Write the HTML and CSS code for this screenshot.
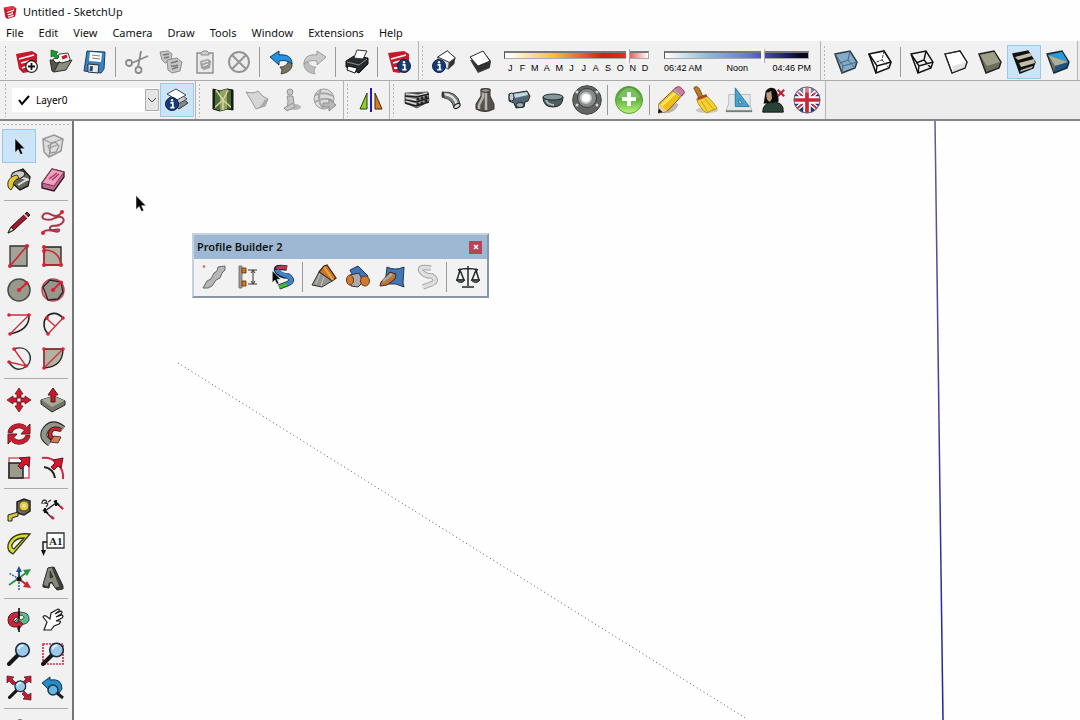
FILE: index.html
```html
<!DOCTYPE html>
<html lang="en">
<head>
<meta charset="utf-8">
<title>Untitled - SketchUp</title>
<link rel="stylesheet" href="styles.css">
</head>
<body>
<svg class="defs" aria-hidden="true">
  <symbol id="logo" viewBox="0 0 24 24"><path d="M1 4 17 1l6 4-2 14-13 4-4-3z" fill="#c8182c"/><path d="M1 4 17 1l6 4-14 3z" fill="#e03a48"/><path d="M7 12l12-4M8 16l8-2v-3M9 20l9-3" stroke="#fff" stroke-width="2" fill="none"/></symbol>
  <symbol id="info" viewBox="0 0 14 14"><circle cx="7" cy="7" r="6.600" fill="#173a78" stroke="#081a3c" stroke-width=".8"/><path d="M5.500 5.800h2.300v4.700M5.300 10.600h4.200" stroke="#fff" stroke-width="1.700" fill="none"/><circle cx="7" cy="3.300" r="1.200" fill="#fff"/></symbol>
  <symbol id="box" viewBox="0 0 24 24"><path d="M2 8 13 1l9 8-7 12-9-4z" fill="#fff" stroke="#222"/><path d="M15 14l7-5-1 7-7 6z" fill="#333"/><path d="M2 8l13 6-1 8-10-6z" fill="#ddd" stroke="#444"/><path d="M2 8 13 1l9 8-7 5z" fill="#fff" stroke="#333"/></symbol>
  <symbol id="lens" viewBox="0 0 24 24"><path d="M2 22l9-9" stroke="#161616" stroke-width="4" stroke-linecap="round"/><circle cx="15.500" cy="8" r="6.800" fill="#9cc8ea" stroke="#1c2b3a" stroke-width="1.600"/><path d="M11.500 7q1-3.500 5-3.500" stroke="#e2f2ff" stroke-width="2" fill="none"/></symbol>
  <symbol id="cursor" viewBox="0 0 12 18"><path d="M1 1v14l3.200-3L6.500 17l2.300-1-2.200-4.800H11z" fill="#050505" stroke="#fff" stroke-width=".5"/></symbol>
</svg>

<header class="titlebar"><svg class="app-icon"><use href="#logo"/></svg><span>Untitled - SketchUp</span></header>
<nav class="menu" aria-label="Main menu">
  <button>File</button><button>Edit</button><button>View</button><button>Camera</button><button>Draw</button><button>Tools</button><button>Window</button><button>Extensions</button><button>Help</button>
</nav>

<div class="toolrow">
  <div class="toolbar first">
    <i class="grip"></i>
    <button class="tool" aria-label="New"><svg viewBox="0 0 24 24"><path d="M1 4 17 1l5 3v8l-8 10-6 1-4-4z" fill="#c8182c"/><path d="M4 9l15-4M6 13l8-2M7 18l6-2" stroke="#fff" stroke-width="1.600"/><circle cx="16.500" cy="16.500" r="5.800" fill="#fff" stroke="#222" stroke-width="1.300"/><path d="M13 16.500h7M16.500 13v7" stroke="#111" stroke-width="1.800"/></svg></button>
    <button class="tool" aria-label="Open"><svg viewBox="0 0 24 24"><path d="M4 9l5-1 1-4 9-1 2 6-1 3-14 9z" fill="#f4f4f4" stroke="#444"/><path d="M13 8l5-2" stroke="#c8182c" stroke-width="3"/><path d="M1 10h3l3 3 4-1-6 10L3 21z" fill="#55564a" stroke="#2c2d24"/><path d="M5 22l5-10 3 1 10-3-6 10z" fill="#8c8d7c" stroke="#2c2d24"/><path d="M2 7V0l7 2-2 2 3 3-2 2-4-3z" fill="#189b32" stroke="#0c5419" stroke-width=".7"/></svg></button>
    <button class="tool" aria-label="Save"><svg viewBox="0 0 24 24"><path d="M4 1l18 1-1 17-3 4L1 21z" fill="#3a82c4" stroke="#173f66"/><path d="M7 2l12 1-1 9-12-1z" fill="#fff"/><path d="M9 5l8 1M9 8l8 1" stroke="#778" /><path d="M5 14l11 1-1 8-10-1z" fill="#e4e9ec" stroke="#234"/><path d="M7 16l3 .3-.5 5-3-.3z" fill="#264a6e"/></svg></button>
    <i class="sep"></i>
    <button class="tool" aria-label="Cut"><svg viewBox="0 0 24 24"><g fill="none" stroke="#8b8b8b" stroke-width="1.800"><circle cx="4" cy="13" r="3"/><circle cx="13.500" cy="20" r="3"/><path d="M7 13l16-7M13 17l3-16"/></g></svg></button>
    <button class="tool" aria-label="Copy"><svg viewBox="0 0 24 24"><g fill="#c5c5c5" stroke="#8e8e8e"><path d="M1 2l8-1 4 3-1 7-6 2-3-3z"/><path d="M8 10l10-2 5 4-2 9-8 2-4-3z"/></g><path d="M4 5l6-1M5 8l5-1M12 13l7-2M12 16h4l3-1M13 19l6-2" stroke="#777" stroke-width="1.500" fill="none"/></svg></button>
    <button class="tool" aria-label="Paste"><svg viewBox="0 0 24 24"><path d="M4 3h16v20H4z" fill="#e8e8e8" stroke="#8e8e8e" stroke-width="1.400"/><path d="M8 5V3l2-2h4l2 2v2z" fill="#ccc" stroke="#8e8e8e"/><path d="M7 11l8-2 3 2-1 7-6 2-3-2z" fill="#a0a0a0"/><path d="M9 13l6-2M10 16l5-2" stroke="#eee" stroke-width="1.300"/></svg></button>
    <button class="tool" aria-label="Delete"><svg viewBox="0 0 24 24"><circle cx="12" cy="12" r="10" fill="#ececec" stroke="#949494" stroke-width="1.900"/><path d="M5 5l14 14M19 5 5 19" stroke="#949494" stroke-width="1.900"/></svg></button>
    <i class="sep"></i>
    <button class="tool" aria-label="Undo"><svg viewBox="0 0 24 24"><path d="M12 24l1-4-2-3c4 0 7-2 8-5l4 1c1 6-4 10-11 11z" fill="#77745f" stroke="#36342a" stroke-width=".8"/><path d="M1 7l9-6v4c8-1 13 2 13 9-3-3-7-4-13-3v4z" fill="#2492df" stroke="#123e66"/></svg></button>
    <button class="tool" aria-label="Redo"><svg viewBox="0 0 24 24"><path d="M12 24l-1-4 2-3c-4 0-7-2-8-5l-4 1c-1 6 4 10 11 11z" fill="#bdbdbd" stroke="#999" stroke-width=".8"/><path d="M23 7l-9-6v4C6 4 1 7 1 14c3-3 7-4 13-3v4z" fill="#ccc" stroke="#999"/></svg></button>
    <i class="sep"></i>
    <button class="tool" aria-label="Print"><svg viewBox="0 0 24 24"><path d="M1 11 9 6l14 2v6l-9 9-13-6z" fill="#272b2d" stroke="#111"/><path d="M9 8l3-8 10 1-4 8z" fill="#fff" stroke="#333"/><path d="M3 16l9 2-2 5-8-3z" fill="#fff" stroke="#111"/><path d="M2 12l12 3 8-6" stroke="#8c9192" fill="none"/></svg></button>
    <i class="sep"></i>
    <button class="tool" aria-label="Model Info"><svg viewBox="0 0 24 24"><path d="M1 3 17 1l5 3v12l-9 7-7-1z" fill="#c8182c"/><path d="M4 9l15-4M6 13l7-2M7 18h5" stroke="#fff" stroke-width="1.800"/><use href="#info" x="10" y="9" width="14" height="14"/></svg></button>
  </div>
  <div class="toolbar">
    <i class="grip"></i>
    <button class="tool" aria-label="Shadow Settings"><svg viewBox="0 0 24 24"><use href="#box" x="4" y="0" width="21" height="21"/><use href="#info" x="0" y="9" width="14" height="14"/></svg></button>
    <button class="tool shadow" aria-label="Shadows"><svg viewBox="0 0 24 24"><path d="M1 10l8 13 12-5-4-7z" fill="#3d3d3d"/><path d="M1 7 14 1l8 10-1 6-12 4z" fill="#303030"/><path d="M1 7 14 1l7 10-12 5z" fill="#fff" stroke="#333"/></svg></button>
    <div class="slider">
      <input class="range month" type="range" min="0" max="100" value="87" aria-label="Month">
      <div class="marks months"><span>J</span><span>F</span><span>M</span><span>A</span><span>M</span><span>J</span><span>J</span><span>A</span><span>S</span><span>O</span><span>N</span><span>D</span></div>
    </div>
    <div class="slider">
      <input class="range day" type="range" min="0" max="100" value="69" aria-label="Time of day">
      <div class="marks"><span>06:42 AM</span><span>Noon</span><span>04:46 PM</span></div>
    </div>
  </div>
  <div class="toolbar">
    <i class="grip"></i>
    <button class="tool" aria-label="X-ray"><svg viewBox="0 0 24 24"><path d="M1 4l15-3 7 11-2 6-13 5z" fill="#86abc8" stroke="#273947" stroke-width="1.500"/><path d="M1 4l8 12 14-4M9 16l-1 7M16 1l-2 9-8 3M14 10l7 8" stroke="#46687f" fill="none"/></svg></button>
    <button class="tool" aria-label="Back Edges"><svg viewBox="0 0 24 24"><path d="M1 4l15-3 7 11-2 6-13 5z" fill="#fff" stroke="#111" stroke-width="1.600"/><path d="M1 4l8 12 14-4M9 16l-1 7" stroke="#111" stroke-width="1.400" fill="none"/><path d="M16 1l-2 9-8 3M14 10l7 8" stroke="#444" stroke-dasharray="3 1" fill="none"/></svg></button>
    <i class="sep"></i>
    <button class="tool" aria-label="Wireframe"><svg viewBox="0 0 24 24"><path d="M1 4l15-3 7 11-2 6-13 5zM1 4l8 12 14-4M9 16l-1 7M16 1l-2 9-8 3M14 10l7 8" fill="none" stroke="#111" stroke-width="1.400"/></svg></button>
    <button class="tool" aria-label="Hidden Line"><svg viewBox="0 0 24 24"><path d="M1 4l15-3 7 11-2 6-13 5z" fill="#fff" stroke="#222" stroke-width="1.200"/><path d="M9 16l14-4-2 6-13 5z" fill="#e2e2e2"/><path d="M1 4l15-3 7 11-2 6-13 5z" fill="none" stroke="#222" stroke-width="1.200"/></svg></button>
    <button class="tool" aria-label="Shaded"><svg viewBox="0 0 24 24"><path d="M1 4l15-3 7 11-2 6-13 5z" fill="#6c6d5e" stroke="#222" stroke-width="1.500"/><path d="M2 5l14-3 6 10-13 4z" fill="#9d9f88"/></svg></button>
    <button class="tool active" aria-label="Shaded With Textures"><svg viewBox="0 0 24 24"><path d="M1 4l15-3 7 11-2 6-13 5z" fill="#111" stroke="#111" stroke-width="1.400"/><path d="M3 7l15-4 2 3-14 4zM7 13l15-4 1 4-14 4zM9 20l12-4-1 2-12 4z" fill="#c5bda8"/></svg></button>
    <button class="tool" aria-label="Monochrome"><svg viewBox="0 0 24 24"><path d="M1 4l15-3 7 11-2 6-13 5z" fill="#1e5380" stroke="#182934" stroke-width="1.400"/><path d="M2 5l14-3 6 10z" fill="#259cdb"/><path d="M2 5l20 7-13 4z" fill="#b1ad94"/><path d="M3 7l6 9-1 6z" fill="#77725e"/></svg></button>
  </div>
</div>

<div class="toolrow second">
  <div class="toolbar first">
    <i class="grip"></i>
    <label class="layer"><svg class="check" viewBox="0 0 12 12"><path d="M1 6l3 4 7-8" fill="none" stroke="#000" stroke-width="2"/></svg><select aria-label="Layer"><option>Layer0</option></select><span class="arrow"><svg viewBox="0 0 10 10"><path d="M1 3l4 4 4-4" fill="none" stroke="#444"/></svg></span></label>
    <button class="tool active" aria-label="Layers"><svg viewBox="0 0 24 24"><path d="M5 14l9-6 9 7-9 6z" fill="#888" stroke="#333"/><path d="M4 10l9-6 9 7-9 5z" fill="#ccc" stroke="#444"/><path d="M2 6l9-5 10 6-9 5z" fill="#fff" stroke="#444"/><use href="#info" x="0" y="9" width="14" height="14"/></svg></button>
  </div>
  <div class="toolbar">
    <i class="grip"></i>
    <button class="tool" aria-label="Add Location"><svg viewBox="0 0 24 24"><path d="M2 1l7 2 7-2 6 1v20l-6-1-7 2-7-2z" fill="#496c35" stroke="#111"/><path d="M9 3l7-2v20l-7 2z" fill="#8da464"/><path d="M3 20 12 12l5-10M5 2l7 10 9 8M12 12v10" stroke="#ddd29c" stroke-width="1.500" fill="none"/><path d="M2 2h2v18H2zM20 2h2v20h-2z" fill="#161d13"/></svg></button>
    <button class="tool" aria-label="Toggle Terrain"><svg viewBox="0 0 24 24"><path d="M1 4q8 2 12-1 4 6 10 8l-3 7-9 3Q6 12 1 4z" fill="#d6d6d6" stroke="#999"/><path d="M11 21q6-3 9-10l3 1-3 6z" fill="#aaa"/></svg></button>
    <button class="tool" aria-label="Photo Textures"><svg viewBox="0 0 24 24"><ellipse cx="16" cy="19" rx="6" ry="3" fill="#b9b9b9"/><g fill="#c6c6c6" stroke="#969696"><circle cx="11" cy="4" r="3"/><path d="M8 8h6l1 7-2 6H8l1-8z"/><path d="M5 20l9-5 2 4-8 4z"/></g></svg></button>
    <button class="tool" aria-label="Preview in Google Earth"><svg viewBox="0 0 24 24"><circle cx="11" cy="11" r="10" fill="#ddd" stroke="#999"/><path d="M2 7q10-4 18 1M2 14q10-6 18-1M8 1q-5 10 2 20" stroke="#a8a8a8" stroke-width="2" fill="none"/><path d="M10 15h6v-4l7 6-7 6v-4h-6z" fill="#b8b8b8" stroke="#8d8d8d"/></svg></button>
  </div>
  <div class="toolbar mirror">
    <i class="grip"></i>
    <button class="tool" aria-label="Mirror"><svg viewBox="0 0 24 24"><path d="M8 5v16H1z" fill="#8bd02b" stroke="#294016"/><path d="M16 5v16h7z" fill="#d87c22" stroke="#432612"/><path d="M12 0v24" stroke="#2016d0" stroke-width="2"/></svg></button>
  </div>
  <div class="toolbar">
    <i class="grip"></i>
    <button class="tool" aria-label="Pipes"><svg viewBox="0 0 24 24"><path d="M0 5l23-1 1 9-12 7-12-5z" fill="#9a9a98" stroke="#292929" stroke-width=".7"/><path d="M0 8l11 1 13-3M0 12l11 2 13-4M0 15l11 3 13-4" stroke="#1d1d1d" stroke-width="1.500" fill="none"/><path d="M1 6l12 1 9-2M1 10l10 2M1 13l10 3" stroke="#eee"/><g fill="#222"><circle cx="13" cy="11" r="1.500"/><circle cx="17" cy="10" r="1.500"/><circle cx="21" cy="9" r="1.500"/><circle cx="13" cy="16" r="1.500"/><circle cx="17" cy="15" r="1.500"/><circle cx="21" cy="13" r="1.500"/></g></svg></button>
    <button class="tool" aria-label="Elbow"><svg viewBox="0 0 24 24"><path d="M3 4q16-1 18 12l-6 4Q13 11 5 10z" fill="#777b7c" stroke="#2c2c2c" stroke-width=".8"/><path d="M5 6q11 1 13 11" fill="none" stroke="#dfe2e2" stroke-width="2.500"/><ellipse cx="18" cy="18" rx="3.500" ry="2" fill="#ddd" stroke="#222" transform="rotate(-30 18 18)"/><ellipse cx="4" cy="7" rx="1.500" ry="3" fill="#333"/></svg></button>
    <button class="tool" aria-label="Reducer"><svg viewBox="0 0 24 24"><path d="M8 1h9v7l4 8v5q-9 5-18 0v-5l5-8z" fill="#55514b" stroke="#393530"/><path d="M10 3v6l-4 8v4M13 4v18" stroke="#b8b4ac" stroke-width="2.500" fill="none"/><ellipse cx="12.500" cy="2.500" rx="4.500" ry="1.800" fill="#999" stroke="#222"/></svg></button>
    <button class="tool" aria-label="Tee"><svg viewBox="0 0 24 24"><path d="M2 6l18-3 3 5-2 5-3 1-1 5-8 1-2-5-5-2z" fill="#526775" stroke="#1d252b"/><path d="M6 6l14-2 1 3-13 3z" fill="#c4d6df"/><ellipse cx="4.500" cy="9" rx="2.500" ry="4" fill="#bdccd3" stroke="#263138"/><ellipse cx="13" cy="17" rx="4" ry="2.500" fill="#9eafb8" stroke="#222"/></svg></button>
    <button class="tool" aria-label="Cap"><svg viewBox="0 0 24 24"><path d="M2 9q0 10 10 10t10-10z" fill="#4e5d60" stroke="#222"/><path d="M5 12q2 5 8 5" stroke="#aabbbc" stroke-width="2" fill="none"/><ellipse cx="12" cy="9" rx="10" ry="3" fill="#839699" stroke="#263034"/></svg></button>
    <button class="tool flange" aria-label="Flange"><svg viewBox="0 0 30 30"><circle cx="15" cy="15" r="14.300" fill="#626564" stroke="#404342"/><circle cx="15" cy="13" r="9.500" fill="#878c8b" stroke="#3c3f3e"/><circle cx="14" cy="13" r="5" fill="#fff" stroke="#c7cdcc" stroke-width="2"/><g fill="#d0d4d3"><circle cx="5" cy="20" r="1.500"/><circle cx="25" cy="20" r="1.500"/><circle cx="25" cy="7" r="1.500"/><circle cx="5" cy="7" r="1.500"/></g></svg></button>
    <i class="sep"></i>
    <button class="tool plus" aria-label="Add"><svg viewBox="0 0 30 30"><defs><linearGradient id="green" x2="0" y2="1"><stop stop-color="#4d9d32"/><stop offset=".5" stop-color="#63b63f"/><stop offset="1" stop-color="#bdf47e"/></linearGradient></defs><circle cx="15" cy="15" r="14.500" fill="url(#green)" stroke="#519a31"/><path d="M3 12q12-20 24 0-12 5-24 0" fill="#8cc876" opacity=".7"/><path d="M7.500 14h15M15 6.500v15" stroke="#fff" stroke-width="4"/></svg></button>
    <i class="sep"></i>
    <button class="tool plus" aria-label="Edit"><svg viewBox="0 0 30 30"><path d="M6 29q13 1 17-9l-2-2z" fill="#b9b7ac"/><path d="M2 19 20 2l8 7-17 18-9 2z" fill="#f3bd19" stroke="#6d521b"/><path d="M5 21 22 5" stroke="#ffe464" stroke-width="3"/><path d="M20 2q3-3 7 1t1 6l-3 2-8-6z" fill="#d37a9d" stroke="#704259"/><path d="M18 4l8 8" stroke="#aaa" stroke-width="2"/><path d="M2 19l9 8-9 2z" fill="#e6cfa2"/><path d="M2 24l4 4-5 1z" fill="#111"/></svg></button>
    <button class="tool plus" aria-label="Clean"><svg viewBox="0 0 30 30"><ellipse cx="17" cy="26" rx="12" ry="3" fill="#c8c8bd"/><path d="M3 2q3-3 6 1l4 9-4 2z" fill="#b97c22" stroke="#704713"/><path d="M6 14l10-4q9 8 12 14-6 2-11 5Q9 24 6 14z" fill="#f5d132" stroke="#b38b18"/><path d="M7 14l10-4" stroke="#ab4721" stroke-width="3"/><path d="M11 16l7 12M15 14l9 11" stroke="#c99c17"/></svg></button>
    <button class="tool plus" aria-label="Dimensions"><svg viewBox="0 0 30 30"><path d="M4 19V9h23v12l2 6H1z" fill="#e5e8e8" stroke="#b4babb"/><path d="M1 27h28" stroke="#777b7b" stroke-width="2"/><path fill-rule="evenodd" d="M11 2v20h15zm4 12 4 5h-4z" fill="#45a5cc" stroke="#2c7798"/></svg></button>
    <button class="tool plus" aria-label="User"><svg viewBox="0 0 30 30"><path d="M5 19Q6 13 7 6q4-6 10-3 4 4 4 14z" fill="#0b0d0b"/><path d="M4 28q0-8 7-10 16-3 15 10z" fill="#294236" stroke="#111"/><path d="M8 7q3 0 5-2l1 8-2 4q-5-1-4-10z" fill="#c19c79"/><path d="M20 4l7 7M27 4l-7 7" stroke="#b71f31" stroke-width="2.200"/></svg></button>
    <button class="tool plus" aria-label="Language"><svg viewBox="0 0 30 30"><defs><clipPath id="ball"><circle cx="15" cy="15" r="14"/></clipPath></defs><g clip-path="url(#ball)"><path d="M0 0h30v30H0z" fill="#27346f"/><path d="M1 3l28 24M29 3 1 27" stroke="#fff" stroke-width="5"/><path d="M1 3l28 24M29 3 1 27" stroke="#b9303d" stroke-width="2"/><path d="M0 15h30M15 0v30" stroke="#fff" stroke-width="8"/><path d="M0 15h30M15 0v30" stroke="#c8283b" stroke-width="4"/><path d="M2 9Q14-7 28 9q-13-4-26 0" fill="#fff" opacity=".4"/></g><circle cx="15" cy="15" r="14" fill="none" stroke="#5d5c78"/></svg></button>
  </div>
</div>

<main class="work">
  <aside class="palette" aria-label="Large Tool Set">
    <i class="grip-h"></i>
    <div class="pair">
      <button class="tool active" aria-label="Select"><svg viewBox="0 0 24 24"><use href="#cursor" x="7" y="3" width="12" height="19"/></svg></button>
      <button class="tool" aria-label="Make Component"><svg viewBox="0 0 24 24"><path d="M2 5l11-4 9 4-2 12-12 6-5-5z" fill="#ddd" stroke="#999" stroke-width="1.500"/><path d="M2 5l8 4-2 14M10 9l12-4M7 12l7-4 4 4-3 6-5 1zM9 14l7-3" stroke="#999" fill="none" stroke-width="1.300"/></svg></button>
      <button class="tool" aria-label="Paint Bucket"><svg viewBox="0 0 24 24"><path d="M6 5l10-4 7 8-2 9-8 4-9-8z" fill="#66675a" stroke="#181818" stroke-width="1.400"/><path d="M13 9l9 3M11 17l10-6" stroke="#ddd" stroke-width="2"/><ellipse cx="11" cy="7" rx="7" ry="4" fill="#ccc" stroke="#222" transform="rotate(-15 11 7)"/><path d="M10 7Q3 8 1 14q-1 6 3 8l2-3q0-7 6-9z" fill="#e5c92f" stroke="#333"/></svg></button>
      <button class="tool" aria-label="Eraser"><svg viewBox="0 0 24 24"><path d="M1 15 11 1l12 3v5L13 23 1 20z" fill="#c56891" stroke="#281820" stroke-width="1.300"/><path d="M1 15 11 1l12 3-10 14z" fill="#f1a0bc" stroke="#743351"/><path d="M8 11l8-6M11 12l7-6" stroke="#a43968" stroke-width="1.500"/></svg></button>
    </div>
    <i class="rule"></i>
    <div class="pair">
      <button class="tool" aria-label="Line"><svg viewBox="0 0 24 24"><path d="M1 23l3-6L20 2l3 3L7 20z" fill="#a8172b" stroke="#1a1a1a"/><path d="M4 17l3 3-6 3z" fill="#ead6a2" stroke="#222"/><path d="M17 4l4 4" stroke="#ddd" stroke-width="1.500"/></svg></button>
      <button class="tool" aria-label="Freehand"><svg viewBox="0 0 24 24"><path d="M21 2C14 12 9 0 3 4c-6 6 6 7 11 4 9-4 12 4 4 7-4 2-8-1-9 3-1 5 11-1 9 3-2 3-10-4-16 1" fill="none" stroke="#a93648" stroke-width="2"/><circle cx="21" cy="2" r="2" fill="#dc2033"/><circle cx="2" cy="23" r="2" fill="#dc2033"/></svg></button>
      <button class="tool" aria-label="Rectangle"><svg viewBox="0 0 24 24"><path d="M3 2h17v20H3z" fill="#a3a294" stroke="#333" stroke-width="1.300"/><path d="M3 22 20 2" stroke="#ce2032" stroke-width="1.500"/><circle cx="3" cy="22" r="2" fill="#dc2033"/><circle cx="20" cy="2" r="2" fill="#dc2033"/></svg></button>
      <button class="tool" aria-label="Rotated Rectangle"><svg viewBox="0 0 24 24"><path d="M3 3h17v18H3z" fill="#b1b0a1" stroke="#222" stroke-width="1.300"/><path d="M3 21V6q15 0 17 15z" fill="none" stroke="#ce2032" stroke-width="1.500"/><g fill="#dc2033"><circle cx="3" cy="3" r="2"/><circle cx="3" cy="7" r="2"/><circle cx="3" cy="21" r="2"/><circle cx="20" cy="21" r="2"/></g></svg></button>
      <button class="tool" aria-label="Circle"><svg viewBox="0 0 24 24"><circle cx="12" cy="12" r="11" fill="#98998a" stroke="#454d4b" stroke-width="1.500"/><path d="M12 12l8-7" stroke="#dc2033" stroke-width="2"/><circle cx="12" cy="12" r="2" fill="#dc2033"/><circle cx="19.500" cy="5" r="2" fill="#dc2033"/></svg></button>
      <button class="tool" aria-label="Polygon"><svg viewBox="0 0 24 24"><circle cx="12" cy="12" r="11" fill="#d9a3ab" stroke="#d04355" stroke-width="1.500"/><path d="M2 9l7-7 11 2 2 10-5 7-10 1z" fill="#96978a" stroke="#292929" stroke-width="1.400"/><path d="M12 12l7-7" stroke="#dc2033" stroke-width="2"/><circle cx="12" cy="12" r="2" fill="#dc2033"/><circle cx="20" cy="4.500" r="2" fill="#dc2033"/></svg></button>
      <button class="tool" aria-label="Arc"><svg viewBox="0 0 24 24"><path d="M22 3q1 15-19 19" stroke="#222" stroke-width="1.500" fill="none"/><path d="M2 3h20L3 22" stroke="#c43140" stroke-width="1.400" fill="none"/><g fill="#dc2033"><circle cx="2" cy="3" r="1.800"/><circle cx="22" cy="3" r="1.800"/><circle cx="3" cy="22" r="1.800"/></g></svg></button>
      <button class="tool" aria-label="2 Point Arc"><svg viewBox="0 0 24 24"><path d="M7 22C-4 10 10-7 22 6" stroke="#222" stroke-width="1.600" fill="none"/><path d="M7 22 22 6M5 6l9 8" stroke="#c43140" stroke-width="1.400"/><g fill="#dc2033"><circle cx="6" cy="6" r="1.800"/><circle cx="22" cy="6" r="1.800"/><circle cx="7" cy="22" r="1.800"/></g></svg></button>
      <button class="tool" aria-label="3 Point Arc"><svg viewBox="0 0 24 24"><path d="M7 3c14-5 21 9 13 17Q9 28 2 16" stroke="#333" stroke-width="1.500" fill="none"/><path d="M7 3l12 17L2 16" stroke="#c43140" stroke-width="1.400" fill="none"/><g fill="#dc2033"><circle cx="7" cy="3" r="1.800"/><circle cx="19" cy="20" r="1.800"/><circle cx="2" cy="16" r="1.800"/></g></svg></button>
      <button class="tool" aria-label="Pie"><svg viewBox="0 0 24 24"><path d="M3 3h19q0 18-19 19z" fill="#b5b1a1" stroke="#222" stroke-width="1.300"/><path d="M3 22V3h19z" fill="none" stroke="#c43140" stroke-width="1.200"/><g fill="#dc2033"><circle cx="3" cy="3" r="1.800"/><circle cx="22" cy="3" r="1.800"/><circle cx="3" cy="22" r="1.800"/></g></svg></button>
    </div>
    <i class="rule"></i>
    <div class="pair">
      <button class="tool" aria-label="Move"><svg viewBox="0 0 24 24"><path d="M12 0l4 6h-2v4h-4V6H8zM12 24l4-6h-2v-4h-4v4H8zM0 12l6-4v2h4v4H6v2zM24 12l-6-4v2h-4v4h4v2z" fill="#d5162b" stroke="#5c1620" stroke-width=".8"/></svg></button>
      <button class="tool" aria-label="Push/Pull"><svg viewBox="0 0 24 24"><path d="M0 12l13-4 11 5-13 8z" fill="#a3a38f" stroke="#272727"/><path d="M0 12l11 6 13-5v4l-13 7-11-8z" fill="#77786b" stroke="#222"/><path d="M0 12l13-4 11 5-13 6z" fill="#a8a896"/><path d="M10 14V7H7l5-7 5 7h-3v7z" fill="#ce1629" stroke="#501b20"/></svg></button>
      <button class="tool" aria-label="Rotate"><svg viewBox="0 0 24 24"><g id="turn"><path d="M3 11A9 8 0 0 1 18 6" fill="none" stroke="#6d1720" stroke-width="5"/><path d="M23 2v10h-9z" fill="#c91d30" stroke="#6d1720"/><path d="M3 10A9 8 0 0 1 19 7" fill="none" stroke="#c91d30" stroke-width="3.600"/></g><use href="#turn" transform="rotate(180 12 12)"/></svg></button>
      <button class="tool" aria-label="Follow Me"><svg viewBox="0 0 24 24"><path d="M22 7Q12-1 5 7q-6 8 4 14" fill="none" stroke="#252525" stroke-width="7"/><path d="M22 7Q12-1 5 7q-6 8 4 14" fill="none" stroke="#93948a" stroke-width="5"/><path d="M20 8q-10-4-11 4 0 4 4 5" fill="none" stroke="#3b1517" stroke-width="4.500"/><path d="M20 8q-10-4-11 4 0 4 4 5" fill="none" stroke="#d02935" stroke-width="2.500"/><path d="M9 20l4-6 7 1-3 6z" fill="#d0815c" stroke="#331a14" stroke-width=".8"/></svg></button>
      <button class="tool" aria-label="Scale"><svg viewBox="0 0 24 24"><path d="M2 2h20v20H2z" fill="#fff" stroke="#d4566a" stroke-width="1.500"/><path d="M2 7h14v15H2z" fill="#9b9b8d" stroke="#222" stroke-width="1.500"/><path d="M11 10l4-5-3-3 11-1-1 10-3-3-5 5z" fill="#d5172b" stroke="#5f1720"/></svg></button>
      <button class="tool" aria-label="Offset"><svg viewBox="0 0 24 24"><path d="M1 2A19 19 0 0 1 22 23" fill="none" stroke="#c92b40" stroke-width="2"/><path d="M3 11A12 12 0 0 1 14 22" fill="none" stroke="#222" stroke-width="2"/><path d="M10 11l4-4-2-3 10-2-2 10-3-2-4 4z" fill="#d5172b" stroke="#5f1720"/></svg></button>
    </div>
    <i class="rule"></i>
    <div class="pair">
      <button class="tool" aria-label="Tape Measure"><svg viewBox="0 0 24 24"><path d="M10 4l7-3 6 2v10l-6 4-7-2z" fill="#66675a" stroke="#222" stroke-width="1.500"/><circle cx="17" cy="8" r="5" fill="#e7c537" stroke="#43433b"/><circle cx="17" cy="8" r="2" fill="#eee3a0"/><path d="M1 17l10-3v4l-6 2v3H1z" fill="#d5c545" stroke="#222"/></svg></button>
      <button class="tool" aria-label="Dimension"><svg viewBox="0 0 24 24"><path d="M4 13 15 5M4 13l8 8M14 4l8 7" stroke="#222" stroke-width="1.400"/><path d="M2 12l5 3M13 3l5 4M4 15v-5M15 8V2" stroke="#111" stroke-width="2"/><path d="M10 18l3 3M19 8l3 3" stroke="#dc2033" stroke-width="2"/><path d="M1 6q0-4 3-4 3 1 0 3 5 0 1 4M7 4l3-2" stroke="#333" stroke-width="1.300" fill="none"/></svg></button>
      <button class="tool" aria-label="Protractor"><svg viewBox="0 0 24 24"><path fill-rule="evenodd" d="M23 2Q5 0 1 13q-1 6 5 9zM17 6 7 17q-4-2-1-6 3-5 11-5z" fill="#dce02f" stroke="#383a18" stroke-width="1.300"/></svg></button>
      <button class="tool" aria-label="Text"><svg viewBox="0 0 24 24"><path d="M6 1h17v15H6z" fill="#fff" stroke="#333" stroke-width="1.300"/><path d="M6 10H2v10" stroke="#111" stroke-width="1.400" fill="none"/><path d="M0 18h5l-2.500 6z" fill="#111"/><text x="8" y="13" class="a1">A1</text></svg></button>
      <button class="tool" aria-label="Axes"><svg viewBox="0 0 24 24"><path d="M12 13v11M12 13 2 7" stroke="#3e69a8" stroke-width="1.600" stroke-dasharray="2 1"/><path d="M12 13V4" stroke="#214f97" stroke-width="2"/><path d="M9 6l3-6 3 6z" fill="#214f97"/><path d="M2 19l17-12" stroke="#23933f" stroke-width="1.800"/><path d="M16 4l8-1-4 7z" fill="#23933f"/><path d="M12 13l8 6" stroke="#cf2031" stroke-width="2"/><path d="M20 15l4 7-8-1z" fill="#cf2031"/><circle cx="12" cy="13" r="2.500" fill="#111"/></svg></button>
      <button class="tool" aria-label="3D Text"><svg viewBox="0 0 24 24"><path d="M2 19l5-17 6-1 9 19v3l-6 1-5-7H9l-1 5-6-1z" fill="#3f413a" stroke="#292a26"/><path fill-rule="evenodd" d="M2 19 7 2l4-1 8 20-5 1-3-6-3 1-1 4zM9 12l3-1-3-6z" fill="#85887c" stroke="#292a26" stroke-width=".7"/></svg></button>
    </div>
    <i class="rule"></i>
    <div class="pair">
      <button class="tool" aria-label="Orbit"><svg viewBox="0 0 24 24"><path d="M12 4q11 0 10 8-1 4-9 5l-1 3-5-6 5-5v3q6-1 5-3-1-2-5-2z" fill="#63b78c" stroke="#22583c"/><path d="M12 4Q1 4 1 12q0 8 10 7v3l5-6-5-4v3Q6 15 7 11q1-2 5-2z" fill="#c52639" stroke="#571721"/><path d="M12 0v11M12 18v6" stroke="#111" stroke-width="1.600"/></svg></button>
      <button class="tool" aria-label="Pan"><svg viewBox="0 0 24 24"><path d="M3 22l3-8-4-5q1-2 3-1l4 3 1-6 7-4q2 0 1 2l-4 3 6-3q2 1 0 3l-5 3 6-2q2 1 0 3l-6 3 4 0q1 1-1 3l-5 2-3 4z" fill="#fff" stroke="#1d1d1d" stroke-width="1.200"/></svg></button>
      <button class="tool" aria-label="Zoom"><svg viewBox="0 0 24 24"><use href="#lens" width="24" height="24"/></svg></button>
      <button class="tool" aria-label="Zoom Window"><svg viewBox="0 0 24 24"><path d="M2 2h20v20H2z" fill="none" stroke="#d72d40" stroke-width="1.700" stroke-dasharray="2 1"/><use href="#lens" width="24" height="24"/></svg></button>
      <button class="tool" aria-label="Zoom Extents"><svg viewBox="0 0 24 24"><path d="M0 0l7 1-2 2 4 4-3 2-4-4-2 2zM24 0l-7 1 2 2-3 3 2 2 4-3 2 2zM24 24l-8-1 2-2-3-3 2-3 4 4 3-2z" fill="#bd1e30" stroke="#531820" stroke-width=".7"/><use href="#lens" x="1" y="4" width="19" height="19"/></svg></button>
      <button class="tool" aria-label="Previous"><svg viewBox="0 0 24 24"><path d="M1 7l8-6v3q12-2 12 9l-3 4-9-6v4z" fill="#268bc7" stroke="#17354e"/><circle cx="12" cy="14" r="5" fill="#64b5e3" stroke="#1f3442" stroke-width="1.500"/><path d="M16 17l6 5" stroke="#192028" stroke-width="3"/></svg></button>
    </div>
    <i class="rule"></i>
    <div class="pair"><button class="tool" aria-label="Position Camera"><svg viewBox="0 0 24 24"><circle cx="13" cy="4" r="3" fill="#777"/><path d="M9 10h8v12H9z" fill="#777"/></svg></button></div>
  </aside>

  <section class="canvas" aria-label="Drawing area">
    <svg class="scene"><defs><linearGradient id="axis" gradientUnits="userSpaceOnUse" x1="0" y1="0" x2="0" y2="600"><stop stop-color="#67598f"/><stop offset="1" stop-color="#2020a0"/></linearGradient></defs><path d="M861 0l8 600" stroke="url(#axis)" stroke-width="1.500"/><path d="M104 242l569 356" stroke="#555" stroke-width="1" stroke-dasharray="1 3"/></svg>
    <svg class="pointer"><use href="#cursor"/></svg>
    <div class="floating" role="dialog" aria-label="Profile Builder 2">
      <header><span>Profile Builder 2</span><button class="close" aria-label="Close"><svg viewBox="0 0 8 8"><path d="M2 2l4 4M6 2 2 6" stroke="#fff" stroke-width="1.500"/></svg></button></header>
      <div class="tools">
        <button class="tool" aria-label="Profile"><svg viewBox="0 0 24 24"><path d="M1 23l4-7 4-2 3-6 3-2 1-4 7-1v4l-3 3-2 5-4 2-4 6-4 2z" fill="#b5b7b8" stroke="#666"/><circle cx="2" cy="1.500" r="1.300" fill="#dc6166"/></svg></button>
        <button class="tool" aria-label="Assembly"><svg viewBox="0 0 24 24"><path d="M3 1h3v22H3z" fill="#9b9b9b" stroke="#666" stroke-width=".8"/><path d="M6 3h4v5H6zM6 16h4v5H6z" fill="#d17720" stroke="#794311"/><path d="M12 5h9M12 19h9M17 5v14M15 8l2-3 2 3M15 16l2 3 2-3" fill="none" stroke="#333"/></svg></button>
        <button class="tool" aria-label="Build"><svg viewBox="0 0 24 24"><path d="M17 3Q4 1 7 6t11 5q7 5-1 8l-8 3" fill="none" stroke="#192d48" stroke-width="5.500"/><path d="M7 5q0 3 11 6 7 5-1 8" fill="none" stroke="#4384c8" stroke-width="4"/><path d="M17 3Q10 1 7 4" fill="none" stroke="#c43245" stroke-width="3.500"/><path d="M17 19l-8 3" stroke="#42b740" stroke-width="4"/><use href="#cursor" x="1" y="5" width="11" height="15"/></svg></button>
        <i class="sep"></i>
        <button class="tool" aria-label="Extend"><svg viewBox="0 0 24 24"><path d="M7 7l5-6 3-1 9 13-4 3z" fill="#c97826" stroke="#422512" stroke-width="1.300"/><path d="M12 2l9 13" stroke="#f0a448" stroke-width="2"/><path d="M7 7l13 9-10 6-10-2z" fill="#94958f" stroke="#333"/><path d="M8 9l-4 10M12 12l-3 9" stroke="#c4c4c0"/></svg></button>
        <button class="tool" aria-label="Join"><svg viewBox="0 0 24 24"><path d="M4 5l8-4 10 10-4 9-9-5z" fill="#3f75be" stroke="#203757"/><path d="M4 10l9-2 4 9-5 5-7-1z" fill="#aaa" stroke="#333"/><ellipse cx="4" cy="15" rx="3.500" ry="5" fill="#d07b32" stroke="#683812"/><ellipse cx="19" cy="16" rx="4.500" ry="5" fill="#d07b32" stroke="#683812"/></svg></button>
        <button class="tool" aria-label="Trim"><svg viewBox="0 0 24 24"><path d="M7 2q8 4 17 0l-1 16 1 4-8-3H5z" fill="#4277b5" stroke="#263853"/><path d="M1 17l9-10 6 2-1 5-8 6-7 1z" fill="#bd7637" stroke="#41281c"/><path d="M3 16l9-7" stroke="#a8aaa9" stroke-width="2.500"/></svg></button>
        <button class="tool" aria-label="Select Path"><svg viewBox="0 0 24 24"><path d="M17 3Q4 1 7 6t11 5q7 5-1 8l-8 3" fill="none" stroke="#a3a3a3" stroke-width="5.500"/><path d="M17 3Q4 1 7 6t11 5q7 5-1 8l-8 3" fill="none" stroke="#dedede" stroke-width="3.500"/></svg></button>
        <i class="sep"></i>
        <button class="tool" aria-label="Quantify"><svg viewBox="0 0 24 24"><path d="M12 1v20M6 22h12M2 5q10-3 20 0M4 5 1 15h7zM20 5l-4 10h7z" fill="none" stroke="#222a26" stroke-width="1.500"/><path d="M0 15h9q-4 5-9 0M15 15h9q-4 5-9 0" fill="#59605c" stroke="#222a26"/></svg></button>
      </div>
    </div>
  </section>
</main>
</body>
</html>
```
FILE: styles.css
```css
* { box-sizing: border-box; }
body { margin: 0; height: 100vh; display: flex; flex-direction: column; overflow: hidden; background: #fdfefd; color: #111; font: 11px/16px "Noto Sans", "Open Sans", sans-serif; }
button { margin: 0; padding: 0; border: 0; background: none; color: inherit; font: inherit; }
.defs { position: absolute; width: 0; height: 0; }
.titlebar { display: flex; align-items: center; gap: 6px; height: 24px; padding-left: 3px; flex: none; }
.app-icon { width: 14px; height: 15px; }
.menu { display: flex; gap: 15px; height: 17px; padding-left: 6px; flex: none; }
.toolrow { display: flex; flex: none; height: 40px; background: #ecedec; border-bottom: 1px solid #ababab; }
.toolrow.second { border-bottom: 2px solid #858585; }
.toolbar { display: flex; align-items: center; background: #f1f1f1; border-right: 1px solid #b4b4b4; padding-right: 2px; }
.toolbar.first { padding-left: 2px; }
.toolrow:not(.second) .toolbar { padding-top: 2px; }
.grip { flex: none; width: 8px; height: 34px; background: radial-gradient(circle, #b5b5b5 1px, transparent 1px) 2px 0 / 3px 4px repeat-y; }
.second .toolbar { padding-right: 1px; }
.second .toolbar:not(.first) .grip { width: 10px; }
.tool { flex: none; width: 34px; height: 34px; display: grid; place-items: center; border: 1px solid transparent; }
.tool svg { width: 24px; height: 24px; overflow: visible; }
.plus svg { width: 28px; height: 28px; }
.flange svg { width: 30px; height: 30px; }
.shadow { margin-left: 3px; }
.tool.active { background: #cce4f7; border-color: #9ac8ea; }
.sep { flex: none; width: 8px; height: 30px; background: linear-gradient(#999, #999) 3px 0 / 1px 100% no-repeat; }
.slider { width: 147px; height: 26px; margin: 0 7px 0 6px; display: flex; flex-direction: column; }
.range { appearance: none; width: 145px; height: 12px; margin: 0; background: transparent; }
.range::-webkit-slider-runnable-track { height: 8px; border: 1px solid #aaa; border-top: 2px solid #777; border-left-color: #555; }
.month::-webkit-slider-runnable-track { background: linear-gradient(90deg, #fff 2%, #f2c42d 34%, #f06435 52%, #cf1f20 68%, #dd292b 83%, #fff); }
.day::-webkit-slider-runnable-track { background: linear-gradient(90deg, #fff, #91bad4 30%, #6979d4 58%, #3438ac 75%, #080817 95%); }
.range::-webkit-slider-thumb { appearance: none; width: 4px; height: 14px; margin-top: -4px; background: #fafafa; border-right: 1px solid #aaa; }
.marks { display: flex; justify-content: space-between; color: #000; font: 9px/14px "Liberation Sans", sans-serif; }
.months { display: grid; grid-template-columns: repeat(12, 1fr); text-align: center; }
.layer { width: 147px; height: 24px; margin: 0 1px 0 2px; display: flex; align-items: center; background: #fff; }
.check { width: 12px; height: 12px; margin: 0 6px; }
.layer select { appearance: none; flex: 1; min-width: 0; border: 0; padding: 0; background: transparent; font: inherit; font-size: 10px; }
.arrow { width: 14px; height: 22px; display: grid; place-items: center; border: 1px solid #adadad; background: #e5e5e5; }
.arrow svg { width: 10px; height: 10px; }
.work { flex: 1; min-height: 0; display: flex; }
.palette { width: 72px; flex: none; padding: 2px 2px 0; background: #f1f1f1; overflow: hidden; }
.grip-h { display: block; height: 6px; background: radial-gradient(circle, #b5b5b5 1px, transparent 1px) 0 0 / 4px 3px repeat-x; }
.pair { display: grid; grid-template-columns: 34px 34px; }
.rule { display: block; height: 8px; margin: 0 2px; background: linear-gradient(#aaa, #aaa) 0 3px / 100% 1px no-repeat; }
.a1 { font: bold 11px "Liberation Serif", serif; fill: #222; }
.canvas { flex: 1; position: relative; overflow: hidden; border-left: 2px solid #777; }
.scene { position: absolute; inset: 0; width: 100%; height: 100%; }
.pointer { position: absolute; left: 61px; top: 73px; width: 12px; height: 19px; }
.floating { position: absolute; left: 118px; top: 112px; border: 2px solid #c4d2df; border-right-color: #8996a5; border-bottom-color: #8996a5; background: #f2f2f2; }
.floating header { display: flex; align-items: center; justify-content: space-between; height: 24px; padding: 0 5px 0 3px; background: #9eb8d3; font-weight: 600; }
.close { width: 13px; height: 13px; display: grid; place-items: center; background: #b84458; }
.close svg { width: 8px; height: 8px; }
.tools { display: flex; align-items: center; padding: 1px 2px 2px 3px; }
```
